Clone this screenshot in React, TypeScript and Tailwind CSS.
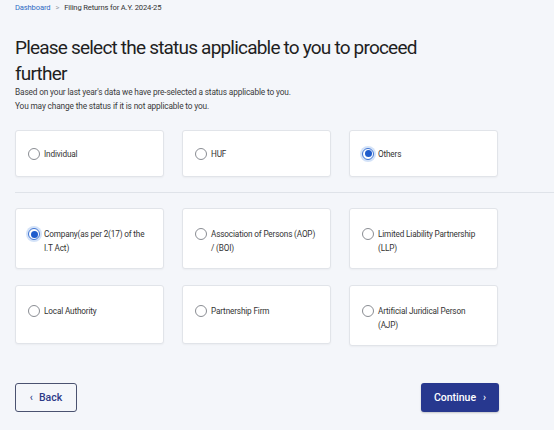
import React from "react";

type Opt = { label: string; selected?: boolean; h?: string };

function Radio({ selected }: { selected?: boolean }) {
  if (selected) {
    return (
      <span className="mt-[1px] flex h-[12px] w-[12px] shrink-0 items-center justify-center rounded-full border border-[#3f74d3] bg-white shadow-[0_0_0_2px_#d3e2f8]">
        <span className="h-[7px] w-[7px] rounded-full bg-[#1f5ccc]" />
      </span>
    );
  }
  return <span className="mt-[1px] h-[12px] w-[12px] shrink-0 rounded-full border border-[#8a8d93] bg-white" />;
}

function Card({ o, top }: { o: Opt; top?: boolean }) {
  return (
    <div
      className={
        "rounded-[3px] border border-[#e1e4e9] bg-white pl-[12px] pr-[12px] shadow-[0_1px_2px_rgba(0,0,0,0.04)] " +
        (top ? "flex h-[47px] items-center" : "pt-[18px] pb-[13px] " + (o.h ?? ""))
      }
    >
      <div className="flex items-start gap-[4px]">
        <Radio selected={o.selected} />
        <span className="text-[8.2px] leading-[14px] tracking-[-0.15px] text-[#333]">{o.label}</span>
      </div>
    </div>
  );
}

export default function App() {
  const top: Opt[] = [{ label: "Individual" }, { label: "HUF" }, { label: "Others", selected: true }];
  const rest: Opt[] = [
    { label: "Company(as per 2(17) of the I.T Act)", selected: true },
    { label: "Association of Persons (AOP) / (BOI)" },
    { label: "Limited Liability Partnership (LLP)" },
    { label: "Local Authority", h: "min-h-[59px]" },
    { label: "Partnership Firm", h: "min-h-[59px]" },
    { label: "Artificial Juridical Person (AJP)" },
  ];
  return (
    <div className="h-[430px] w-[554px] overflow-hidden bg-[#f4f6fa] pl-[15px] font-['Roboto',sans-serif]">
      <div className="pt-[3px] text-[7.6px] leading-[10px] tracking-[-0.15px]">
        <span className="text-[#2f6cc4]">Dashboard</span>
        <span className="mx-[5px] text-[#9aa0a8]">&gt;</span>
        <span className="text-[#333]">Filing Returns for A.Y. 2024-25</span>
      </div>
      <h1 className="mt-[22px] w-[420px] text-[19px] leading-[25.5px] font-normal tracking-[-0.8px] text-[#1f1f1f]">
        Please select the status applicable to you to proceed further
      </h1>
      <p className="mt-[-1px] text-[8.3px] leading-[14px] tracking-[-0.15px] text-[#3a3a3a]">
        Based on your last year's data we have pre-selected a status applicable to you.
        <br />
        You may change the status if it is not applicable to you.
      </p>
      <div className="mt-[17px] grid w-[483px] grid-cols-[149px_149px_149px] gap-x-[18px]">
        {top.map((o) => (
          <Card key={o.label} o={o} top />
        ))}
      </div>
      <div className="mt-[15px] h-px bg-[#dfe3e9]" />
      <div className="mt-[15px] grid w-[483px] grid-cols-[149px_149px_149px] gap-x-[18px] gap-y-[16px] items-start">
        {rest.map((o) => (
          <Card key={o.label} o={o} />
        ))}
      </div>
      <div className="mt-[37px] flex w-[484px] justify-between">
        <button className="flex h-[29px] w-[62px] items-center justify-center gap-[6px] rounded-[3px] border border-[#4a5270] bg-transparent text-[10.5px] font-medium text-[#2d3a87]">
          <span className="text-[10px]">‹</span>
          <span>Back</span>
        </button>
        <button className="flex h-[29px] w-[78px] items-center justify-center gap-[7px] rounded-[3px] bg-[#27388f] text-[10.5px] font-medium text-white shadow-[0_1px_2px_rgba(0,0,0,0.2)]">
          <span>Continue</span>
          <span className="text-[10px]">›</span>
        </button>
      </div>
    </div>
  );
}
